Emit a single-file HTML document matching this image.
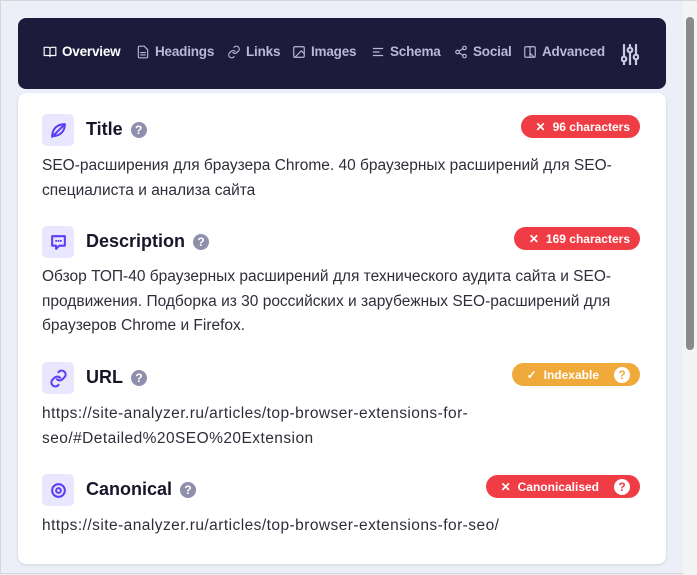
<!DOCTYPE html>
<html><head><meta charset="utf-8"><style>
*{margin:0;padding:0;box-sizing:border-box}
body{width:697px;height:574px;overflow:hidden;background:#eceff8;font-family:"Liberation Sans",sans-serif;position:relative;border:1px solid #d6d6d6}
.nav{position:absolute;left:17px;top:17px;width:648px;height:71px;background:#1c1b3b;border-radius:8px}
.ni{position:absolute;top:26px;font-size:13.5px;font-weight:bold;color:#b9b9d6;display:flex;align-items:center;gap:5px;letter-spacing:-0.2px}
.ni svg{width:14px;height:14px;fill:none;stroke:currentColor;stroke-width:2;stroke-linecap:round;stroke-linejoin:round}
.card{position:absolute;left:17px;top:92px;width:648px;height:471px;background:#fff;border-radius:8px;box-shadow:0 1px 3px rgba(0,0,0,.12)}
.ib{position:absolute;left:41px;width:32px;height:32px;background:#e9e7fd;border-radius:5px;display:flex;align-items:center;justify-content:center}
.ib svg{width:19px;height:19px;fill:none;stroke:#5b3ef5;stroke-width:2.6;stroke-linecap:round;stroke-linejoin:round}
.h{position:absolute;left:85px;font-size:18px;font-weight:bold;color:#16162a;display:flex;align-items:center;gap:8px}
.q{width:16px;height:16px;border-radius:50%;background:#8f8fac;color:#fff;font-size:12px;font-weight:bold;display:inline-flex;align-items:center;justify-content:center}
.t{position:absolute;left:41px;width:610px;font-size:15.5px;line-height:24.5px;color:#2e2e3a}
.u{letter-spacing:0.45px}
.b{position:absolute;right:56px;height:23px;border-radius:12px;color:#fff;font-size:12px;font-weight:bold;display:flex;align-items:center;padding:0 10px 0 15px;gap:7px}
.red{background:#f03c44}.or{background:#f0aa3b}
.b .qq{width:16px;height:16px;border-radius:50%;background:#fff;font-size:12px;display:inline-flex;align-items:center;justify-content:center;margin-left:8px}
.sb{position:absolute;left:682px;top:0;width:15px;height:574px;background:#f4f4f4}
.th{position:absolute;left:685px;top:16px;width:8px;height:333px;background:#8a8a8a;border-radius:4px}
</style></head><body>
<div class="nav">
<div class="ni" style="left:25px;color:#fff"><svg viewBox="0 0 24 24"><path d="M2 4h7a3 3 0 013 3v13a2 2 0 00-2-2H2zM22 4h-7a3 3 0 00-3 3v13a2 2 0 012-2h8z"/></svg>Overview</div>
<div class="ni" style="left:118px"><svg viewBox="0 0 24 24"><path d="M14 2H6a2 2 0 00-2 2v16a2 2 0 002 2h12a2 2 0 002-2V8zM8 13h8M8 17h8"/></svg>Headings</div>
<div class="ni" style="left:209px"><svg viewBox="0 0 24 24"><path d="M10 13a5 5 0 007 0l3-3a5 5 0 00-7-7l-1 1M14 11a5 5 0 00-7 0l-3 3a5 5 0 007 7l1-1"/></svg>Links</div>
<div class="ni" style="left:274px"><svg viewBox="0 0 24 24"><rect x="3" y="3" width="18" height="18" rx="2"/><path d="M21 15l-5-5L5 21"/></svg>Images</div>
<div class="ni" style="left:353px"><svg viewBox="0 0 24 24"><path d="M4 6h16M4 12h10M4 18h16"/></svg>Schema</div>
<div class="ni" style="left:436px"><svg viewBox="0 0 24 24"><circle cx="18" cy="5" r="3"/><circle cx="6" cy="12" r="3"/><circle cx="18" cy="19" r="3"/><path d="M8.6 13.5l6.8 4M15.4 6.5l-6.8 4"/></svg>Social</div>
<div class="ni" style="left:505px"><svg viewBox="0 0 24 24"><rect x="3" y="3" width="18" height="18" rx="2"/><path d="M12 3v18M12 14l6 6"/></svg>Advanced</div>
<svg style="position:absolute;left:603px;top:25px" width="18" height="22" viewBox="0 0 18 22" fill="none" stroke="#c9c9e4" stroke-width="2.2" stroke-linecap="round"><path d="M3 2v20M9 2v20M15 2v20"/><circle cx="3" cy="16" r="2.3" fill="#1c1b3b"/><circle cx="9" cy="7" r="2.3" fill="#1c1b3b"/><circle cx="15" cy="14" r="2.3" fill="#1c1b3b"/></svg>
</div>
<div class="card"></div>

<div class="ib" style="top:113px"><svg viewBox="0 0 24 24"><path d="M20 4C10 4 4 10 4 20M20 4c0 9-6 15-15 15M20 4L6 18"/></svg></div>
<div class="h" style="top:118px">Title <span class="q">?</span></div>
<div class="b red" style="top:114px">✕ <span>96 characters</span></div>
<div class="t" style="top:153px">SEO-расширения для браузера Chrome. 40 браузерных расширений для SEO-специалиста и анализа сайта</div>

<div class="ib" style="top:225px"><svg viewBox="0 0 24 24"><path d="M4 4h16v12h-7l-4 4v-4H4z"/><path d="M9 10h.01M12 10h.01M15 10h.01"/></svg></div>
<div class="h" style="top:230px">Description <span class="q">?</span></div>
<div class="b red" style="top:226px">✕ <span>169 characters</span></div>
<div class="t" style="top:264px">Обзор ТОП-40 браузерных расширений для технического аудита сайта и SEO-продвижения. Подборка из 30 российских и зарубежных SEO-расширений для браузеров Chrome и Firefox.</div>

<div class="ib" style="top:361px"><svg viewBox="0 0 24 24"><path d="M10 13a5 5 0 007 0l3-3a5 5 0 00-7-7l-1 1M14 11a5 5 0 00-7 0l-3 3a5 5 0 007 7l1-1"/></svg></div>
<div class="h" style="top:366px">URL <span class="q">?</span></div>
<div class="b or" style="top:362px">✓ <span>Indexable</span><span class="qq" style="color:#f0aa3b">?</span></div>
<div class="t u" style="top:401px">https://site-analyzer.ru/articles/top-browser-extensions-for-<br>seo/#Detailed%20SEO%20Extension</div>

<div class="ib" style="top:473px"><svg viewBox="0 0 24 24"><circle cx="12" cy="12" r="8"/><circle cx="12" cy="12" r="3"/></svg></div>
<div class="h" style="top:478px">Canonical <span class="q">?</span></div>
<div class="b red" style="top:474px">✕ <span>Canonicalised</span><span class="qq" style="color:#f03c44">?</span></div>
<div class="t u" style="top:513px">https://site-analyzer.ru/articles/top-browser-extensions-for-seo/</div>

<div class="sb"></div><div class="th"></div>
</body></html>
